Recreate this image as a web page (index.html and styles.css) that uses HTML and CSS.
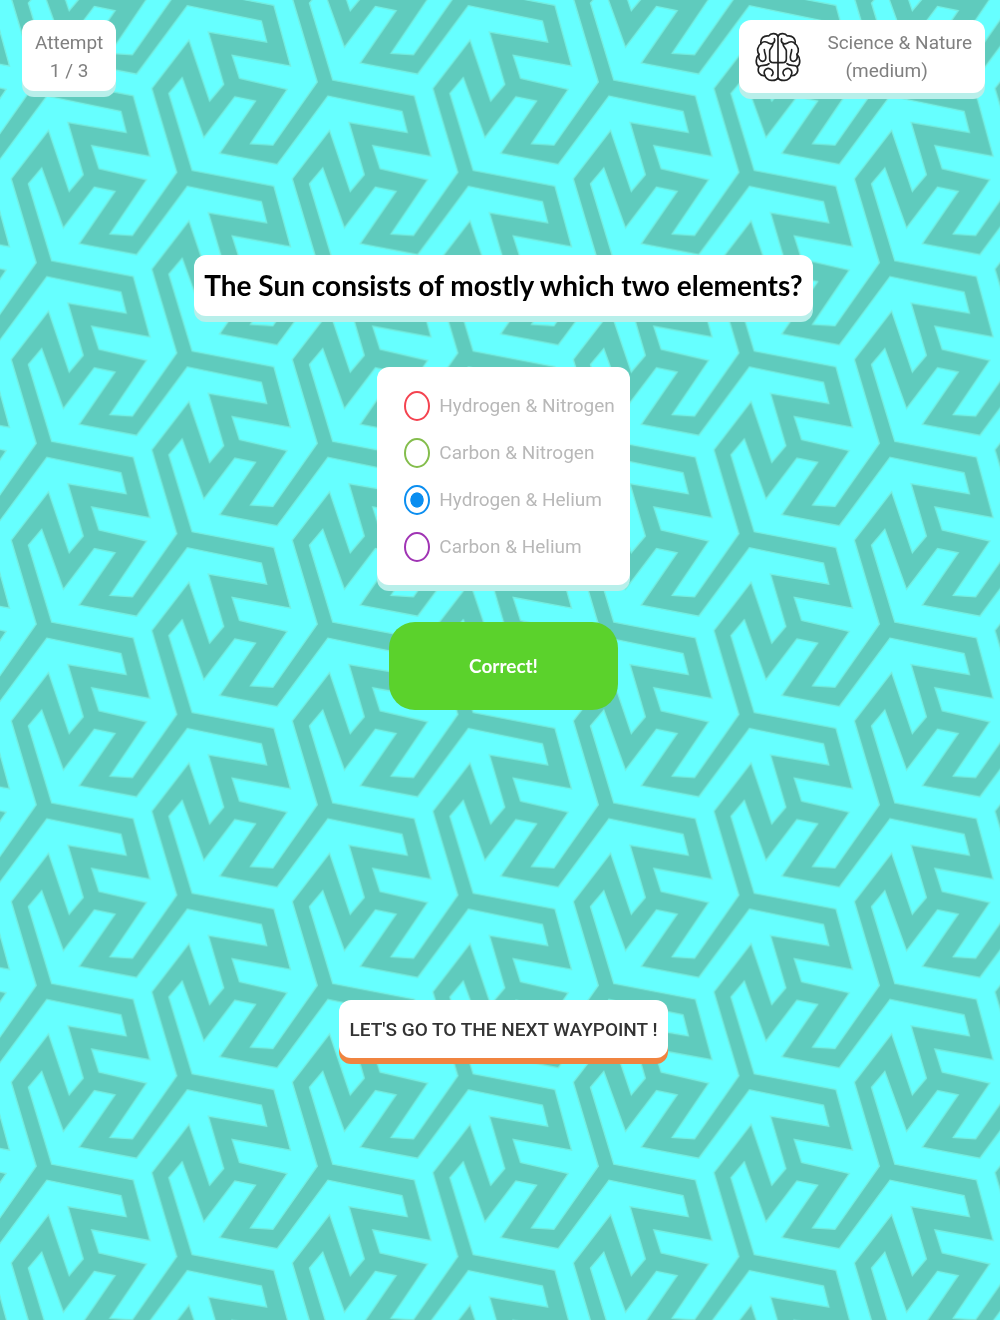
FILE: index.html
```html
<!DOCTYPE html>
<html lang="en">
<head>
<meta charset="utf-8">
<meta name="viewport" content="width=device-width, initial-scale=1">
<title>Quiz</title>
<link rel="stylesheet" href="styles.css">
</head>
<body>
<svg class="backdrop" aria-hidden="true">
  <defs>
    <path id="star" d="M155 306L400 353 450 535 275 503 297 572 440 605 330 768 397 772 530 583 455 331 567 186 629 369 671 319 625 162 800 192 784 129 562 83 410 288 237 255 345 98 283 85 190 208 125 28 85 75Z"/>
    <pattern id="maze" width="843" height="542" patternUnits="userSpaceOnUse" patternTransform="translate(0 -22) scale(.3334)">
      <rect class="maze-ground" width="843" height="542"/>
      <g class="maze-stars">
        <use href="#star"/>
        <use href="#star" y="-542"/>
        <use href="#star" x="421.5" y="271"/>
        <use href="#star" x="421.5" y="-271"/>
        <use href="#star" x="-421.5" y="271"/>
        <use href="#star" x="-421.5" y="-271"/>
      </g>
    </pattern>
  </defs>
  <rect width="100%" height="100%" fill="url(#maze)"/>
</svg>
<div class="page">
  <header class="top">
    <div class="card attempt">Attempt<br>1 / 3</div>
    <div class="card category">
      <svg class="brain" viewBox="0 0 138 148" aria-hidden="true">
        <g id="half">
          <path d="M69 12C64 2 48 1 41 11 26 9 15 19 18 34 7 42 5 56 12 66 2 76 0 96 12 103 5 118 15 132 30 130 36 147 62 148 69 137"/>
          <path d="M18 34C24 25 36 28 42 33 52 38 62 30 58 19M54 34C54 44 45 47 44 55V80Q44 91 55 91H69M12 66C8 86 24 92 31 82 36 72 28 64 28 52M12 103C20 96 34 103 42 94M30 130C22 114 36 104 46 110 56 114 56 124 50 130"/>
        </g>
        <use href="#half" transform="translate(138) scale(-1 1)"/>
        <path d="M69 12V138"/>
      </svg>
      <div>Science &amp; Nature<div class="level">(medium)</div></div>
    </div>
  </header>
  <main class="quiz">
    <h1 class="card question">The Sun consists of mostly which two elements?</h1>
    <form class="card options">
      <label class="option red"><input type="radio" name="answer" disabled>Hydrogen &amp; Nitrogen</label>
      <label class="option green"><input type="radio" name="answer" disabled>Carbon &amp; Nitrogen</label>
      <label class="option blue"><input type="radio" name="answer" checked disabled>Hydrogen &amp; Helium</label>
      <label class="option purple"><input type="radio" name="answer" disabled>Carbon &amp; Helium</label>
    </form>
    <div class="result" role="status">Correct!</div>
    <button class="card next" type="button">LET'S GO TO THE NEXT WAYPOINT !</button>
  </main>
</div>
</body>
</html>
```
FILE: styles.css
```css
* { box-sizing: border-box; }

body {
  margin: 0;
  font-family: Roboto, sans-serif;
  font-size: 19px;
  line-height: 28px;
  color: #808080;
}

.backdrop {
  position: fixed;
  inset: 0;
  width: 100%;
  height: 100%;
  z-index: -1;
}

.maze-ground { fill: #5fcbbd; }
.maze-stars { fill: #66ffff; stroke: #74eee0; stroke-width: 4; }

.page {
  min-height: 100vh;
  padding: 20px 15px 20px 22px;
}

.card {
  background: #fff;
  border-radius: 12px;
  box-shadow: 0 6px 0 #b8efea;
}

.top {
  display: flex;
  justify-content: space-between;
  align-items: flex-start;
  text-align: center;
}

.attempt { padding: 9px 13px 6px; }

.category {
  display: flex;
  align-items: center;
  gap: 26px;
  padding: 9px 13px 8px 16px;
}

.level { padding-right: 26px; }

.brain {
  width: 46px;
  height: 50px;
  fill: none;
  stroke: #222;
  stroke-width: 5;
  stroke-linecap: round;
  stroke-linejoin: round;
}

.quiz {
  display: flex;
  flex-direction: column;
  align-items: center;
  padding-top: 162px;
}

.question {
  margin: 0;
  padding: 13px 10px;
  font-family: Lato, sans-serif;
  font-size: 28px;
  line-height: 35px;
  font-weight: 700;
  color: #000;
  text-align: center;
}

.options {
  display: grid;
  gap: 17px;
  margin-top: 51px;
  padding: 24px 15px 23px 27px;
  color: #b8b8b8;
}

.option {
  display: flex;
  align-items: center;
  gap: 9px;
}

.option input {
  appearance: none;
  width: 26px;
  height: 30px;
  margin: 0;
  border: 2px solid currentColor;
  border-radius: 50%;
}

.option input:checked {
  background: radial-gradient(ellipse 7px 8px, currentColor 90%, transparent);
}

.red input { color: #f44350; }
.green input { color: #84bd4c; }
.blue input { color: #0b8ef0; }
.purple input { color: #a034b4; }

.result {
  width: 229px;
  margin-top: 37px;
  padding: 30px;
  border-radius: 26px;
  background: #5bd22c;
  color: #fff;
  font-family: Lato, sans-serif;
  font-size: 19px;
  font-weight: 700;
  text-align: center;
}

.next {
  margin-top: 290px;
  padding: 16px 11px 14px;
  border: 0;
  box-shadow: 0 6px 0 #f08440;
  font: 500 19px/28px Roboto, sans-serif;
  color: #333;
}
```
